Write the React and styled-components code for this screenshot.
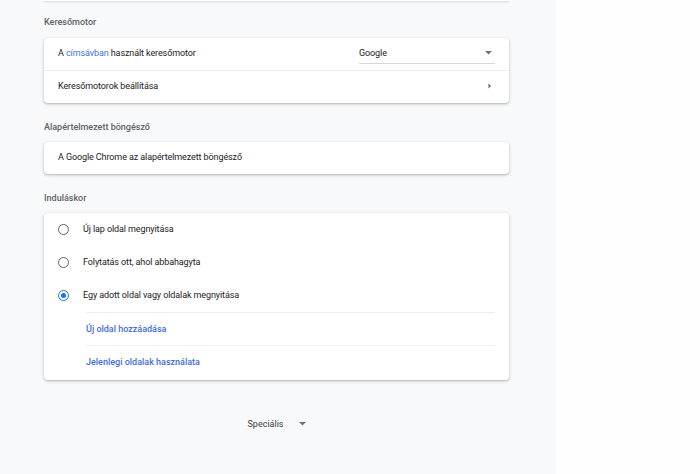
import React from "react";
import styled, { createGlobalStyle } from "styled-components";

const Global = createGlobalStyle`
  html, body { margin: 0; padding: 0; background: #fefefe; }
  body { font-family: Roboto, "Liberation Sans", sans-serif; }
`;

const Page = styled.div`
  display: flex;
  width: 700px;
  height: 474px;
  overflow: hidden;
`;

const Main = styled.div`
  width: 556px;
  height: 474px;
  background: #f8f9fa;
  flex: none;
`;

const Column = styled.div`
  width: 465px;
  margin-left: 44px;
  display: flex;
  flex-direction: column;
`;

const CardTail = styled.div`
  height: 1px;
  background: #fff;
  border-radius: 0 0 4px 4px;
  box-shadow: 0 1px 2px rgba(60, 64, 67, 0.25);
`;

const Heading = styled.div`
  font-size: 9px;
  font-weight: 500;
  color: #5f6368;
  line-height: 16px;
  padding: ${(p) => (p.$first ? "13px 0 8px" : "16px 0 7px")};
`;

const Card = styled.div`
  background: #fff;
  border-radius: 4px;
  box-shadow: 0 1px 2px rgba(60, 64, 67, 0.28), 0 1px 3px 1px rgba(60, 64, 67, 0.1);
  display: flex;
  flex-direction: column;
  padding-bottom: ${(p) => p.$pb || 0}px;
`;

const Text = `
  font-size: 9px;
  letter-spacing: -0.1px;
  color: #202124;
`;

const Row = styled.div`
  display: flex;
  align-items: center;
  box-sizing: border-box;
  height: ${(p) => p.$h || 32}px;
  padding: 0 14px 2px;
  ${Text}
  border-top: ${(p) => (p.$sep ? "1px solid #eeeeee" : "none")};
`;

const Label = styled.span`
  flex: 1;
`;

const Link = styled.span`
  color: #3f6fd9;
`;

const Select = styled.div`
  width: 136px;
  height: 19px;
  display: flex;
  align-items: center;
  justify-content: space-between;
  border-bottom: 1px solid #d6d7d9;
  margin-top: 3px;
  box-sizing: border-box;
  padding-right: 3px;
  padding-bottom: 2px;
`;

const RadioRow = styled.div`
  display: flex;
  align-items: center;
  height: 33px;
  box-sizing: border-box;
  padding: 0 14px 1px;
  ${Text}
`;

const Radio = styled.span`
  width: 11px;
  height: 11px;
  border-radius: 50%;
  box-sizing: border-box;
  border: 1.8px solid ${(p) => (p.$on ? "#1a73e8" : "#5f6368")};
  margin-right: 14px;
  display: flex;
  align-items: center;
  justify-content: center;
  &::after {
    content: "";
    display: ${(p) => (p.$on ? "block" : "none")};
    width: 5px;
    height: 5px;
    border-radius: 50%;
    background: #1a73e8;
  }
`;

const SubRow = styled.div`
  margin: 0 14px 0 42px;
  height: 33px;
  box-sizing: border-box;
  padding-bottom: 1px;
  display: flex;
  align-items: center;
  border-top: 1px solid #efefef;
  font-size: 9px;
  font-weight: 500;
  color: #3f6fd9;
`;

const Footer = styled.div`
  display: flex;
  justify-content: center;
  align-items: center;
  gap: 15px;
  margin-top: 38px;
  height: 12px;
  font-size: 9px;
  color: #3c4043;
`;

const Down = () => (
  <svg width="7" height="4" viewBox="0 0 7 4">
    <path d="M0 0 L7 0 L3.5 3.5 Z" fill="#6f7276" />
  </svg>
);

const Right = () => (
  <svg width="4" height="6" viewBox="0 0 4 6">
    <path d="M0.5 0.5 L3 3 L0.5 5.5 Z" fill="#5f6368" />
  </svg>
);

export default function App() {
  return (
    <>
      <Global />
      <Page>
        <Main>
          <Column>
            <CardTail />
            <Heading $first>Keresőmotor</Heading>
            <Card>
              <Row $h={32}>
                <Label>
                  A <Link>címsávban</Link> használt keresőmotor
                </Label>
                <Select>
                  <span>Google</span>
                  <Down />
                </Select>
              </Row>
              <Row $h={33} $sep>
                <Label>Keresőmotorok beállítása</Label>
                <Right />
                <span style={{ width: 3 }} />
              </Row>
            </Card>
            <Heading>Alapértelmezett böngésző</Heading>
            <Card>
              <Row $h={32}>
                <Label>A Google Chrome az alapértelmezett böngésző</Label>
              </Row>
            </Card>
            <Heading>Induláskor</Heading>
            <Card $pb={2}>
              <RadioRow>
                <Radio />
                Új lap oldal megnyitása
              </RadioRow>
              <RadioRow>
                <Radio />
                Folytatás ott, ahol abbahagyta
              </RadioRow>
              <RadioRow>
                <Radio $on />
                Egy adott oldal vagy oldalak megnyitása
              </RadioRow>
              <SubRow>Új oldal hozzáadása</SubRow>
              <SubRow>Jelenlegi oldalak használata</SubRow>
            </Card>
            <Footer>
              <span>Speciális</span>
              <Down />
            </Footer>
          </Column>
        </Main>
      </Page>
    </>
  );
}
